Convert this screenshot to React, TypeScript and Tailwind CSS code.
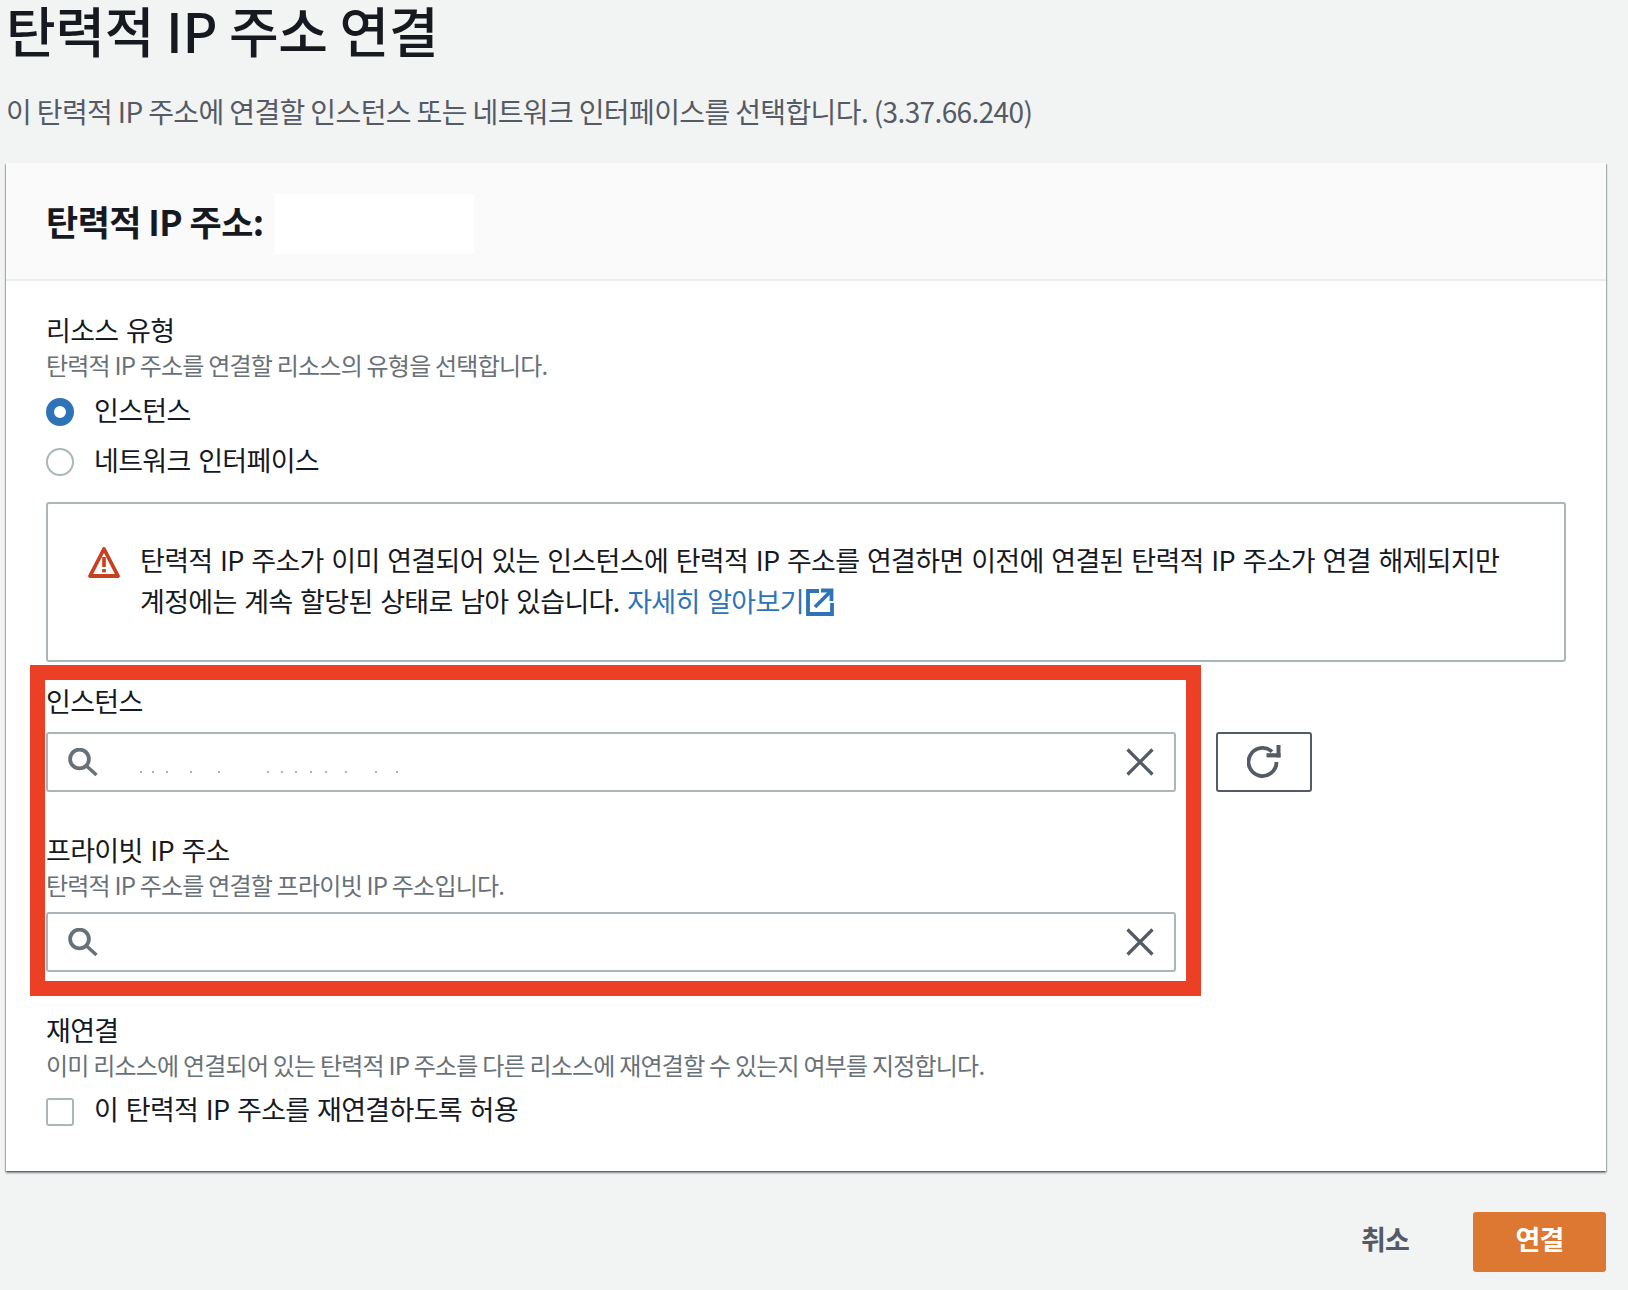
const font = "font-['Noto_Sans_CJK_KR','Noto_Sans',sans-serif]"
const bodyText = 'text-[27px] tracking-[-0.68px] [word-spacing:2.2px] text-[#16191f]'

function Dots() {
  // leftover specks of the masked instance id
  const gaps = [0, 10, 12, 22, 26, 47, 12, 12, 13, 13, 18, 28, 19]
  return (
    <div className="ml-[42px] mt-[20px] flex items-center">
      {gaps.map((g, i) => (
        <span key={i} className="h-[2px] w-[2px] bg-[#aab7b8]" style={{ marginLeft: g }} />
      ))}
    </div>
  )
}

function SearchIcon() {
  return (
    <svg viewBox="0 0 30 28" className="h-[28px] w-[30px] shrink-0" fill="none" stroke="#687078">
      <circle cx="11.5" cy="11" r="9.4" strokeWidth="3.8" />
      <path d="M18 17.5 L28.5 27" strokeWidth="3.4" />
    </svg>
  )
}

function CloseIcon() {
  return (
    <svg viewBox="0 0 28 28" className="h-[28px] w-[28px] shrink-0" fill="none" stroke="#545b64" strokeWidth="3.2">
      <path d="M1.5 1.5 L26.5 26.5 M26.5 1.5 L1.5 26.5" />
    </svg>
  )
}

function SearchInput({ masked }: { masked?: boolean }) {
  return (
    <div className="flex h-[60px] items-center rounded-[3px] border-2 border-[#aab7b8] bg-white pl-[20px] pr-[20px]">
      <SearchIcon />
      <div className="flex-1">{masked && <Dots />}</div>
      <CloseIcon />
    </div>
  )
}

function Label({ children, leading = 'leading-[28px]' }: { children: React.ReactNode; leading?: string }) {
  return <div className={`h-[32px] ${leading} ${bodyText}`}>{children}</div>
}

function Desc({ children, className = 'leading-[24px]' }: { children: React.ReactNode; className?: string }) {
  return <div className={`h-[28px] text-[24px] tracking-[-0.78px] text-[#687078] ${className}`}>{children}</div>
}

export default function App() {
  return (
    <div className={`${font} min-h-[1290px] w-[1628px] overflow-hidden bg-[#f2f3f3] pl-[6px]`}>
      <h1 className="h-[62px] text-[54px] font-medium leading-[60px] tracking-[-0.3px] text-[#16191f]">
        탄력적 IP 주소 연결
      </h1>
      <p className="mt-[29px] h-[40px] text-[28px] leading-[40px] tracking-[-0.62px] text-[#545b64]">
        이 탄력적 IP 주소에 연결할 인스턴스 또는 네트워크 인터페이스를 선택합니다. (3.37.66.240)
      </p>

      <div className="mt-[32px] w-[1600px] bg-white shadow-[0_2px_2px_0_rgba(0,28,36,0.45),1px_1px_1px_0_rgba(0,28,36,0.2),-1px_1px_1px_0_rgba(0,28,36,0.2)]">
        <div className="flex h-[118px] items-center border-b-2 border-[#eaeded] bg-[#fafafa] pl-[40px]">
          <h2 className="text-[35px] font-bold leading-[40px] tracking-[-0.55px] text-[#16191f]">탄력적 IP 주소:</h2>
          <div className="ml-[10px] mt-[6px] h-[60px] w-[200px] bg-white" />
        </div>

        <div className="pb-[45px] pl-[40px] pr-[40px] pt-[33px]">
          <Label leading="leading-[32px]">리소스 유형</Label>
          <Desc className="mt-[6px] leading-[26px]">탄력적 IP 주소를 연결할 리소스의 유형을 선택합니다.</Desc>

          <div className="mt-[18px] flex h-[28px] items-center">
            <span className="h-[28px] w-[28px] rounded-full border-[8px] border-[#2e73b8] bg-white" />
            <span className={`ml-[20px] pb-[3px] ${bodyText}`}>인스턴스</span>
          </div>
          <div className="mt-[22px] flex h-[28px] items-center">
            <span className="h-[28px] w-[28px] rounded-full border-2 border-[#aab7b8] bg-white" />
            <span className={`ml-[20px] pb-[3px] ${bodyText}`}>네트워크 인터페이스</span>
          </div>

          <div className="mt-[26px] flex h-[160px] rounded-[3px] border-2 border-[#aab7b8] pl-[40px] pt-[35px]">
            <svg viewBox="0 0 32 32" className="mt-[7px] h-[32px] w-[32px] shrink-0">
              <path d="M16 3 L30 30 H2 Z" fill="none" stroke="#c7401f" strokeWidth="3.8" strokeLinejoin="round" />
              <rect x="14.2" y="11" width="3.6" height="10" fill="#c7401f" />
              <rect x="14.2" y="23" width="3.6" height="3.4" fill="#c7401f" />
            </svg>
            <p className={`ml-[20px] w-[1380px] leading-[41px] ${bodyText}`}>
              탄력적 IP 주소가 이미 연결되어 있는 인스턴스에 탄력적 IP 주소를 연결하면 이전에 연결된 탄력적 IP 주소가 연결 해제되지만<br />
              계정에는 계속 할당된 상태로 남아 있습니다.{' '}
              <a className="text-[#2e73b8]">
                자세히 알아보기
                <svg viewBox="0 0 28 28" className="ml-[2px] inline h-[28px] w-[28px] align-[-4px]" fill="none" stroke="#2e73b8" strokeWidth="3.8">
                  <path d="M13 3 H2 V26 H26 V15" />
                  <path d="M9 19 L24 4" />
                  <path d="M15 2.5 H25.5 V13" />
                </svg>
              </a>
            </p>
          </div>

          <div className="mt-[24px] flex items-start gap-[40px]">
            <div className="relative w-[1130px]">
              <Label leading="leading-[29px]">인스턴스</Label>
              <div className="mt-[14px]">
                <SearchInput masked />
              </div>
              <div className="mt-[44px]">
                <Label>프라이빗 IP 주소</Label>
              </div>
              <Desc className="mt-[5px] leading-[24px]">탄력적 IP 주소를 연결할 프라이빗 IP 주소입니다.</Desc>
              <div className="mt-[11px]">
                <SearchInput />
              </div>
              <div className="pointer-events-none absolute -bottom-[24px] -left-[16px] -right-[25px] -top-[21px] border-[15px] border-[#eb4026]" />
            </div>
            <button className="mt-[46px] flex h-[60px] w-[96px] items-center justify-center rounded-[3px] border-2 border-[#545b64] bg-white">
              <svg viewBox="0 0 34 34" className="h-[34px] w-[34px]" fill="none" stroke="#545b64" strokeWidth="3.8">
                <path d="M25 6.7 A14 14 0 1 0 29.5 17" />
                <rect x="19.5" y="8.2" width="14" height="4.2" fill="#545b64" stroke="none" />
                <rect x="29.5" y="0" width="4" height="12.4" fill="#545b64" stroke="none" />
              </svg>
            </button>
          </div>

          <div className="mt-[44px]">
            <Label>재연결</Label>
          </div>
          <Desc className="mt-[5px] leading-[24px]">이미 리소스에 연결되어 있는 탄력적 IP 주소를 다른 리소스에 재연결할 수 있는지 여부를 지정합니다.</Desc>
          <div className="mt-[17px] flex h-[28px] items-center">
            <span className="h-[28px] w-[28px] rounded-[3px] border-2 border-[#aab7b8] bg-white" />
            <span className={`ml-[20px] pb-[5px] ${bodyText}`}>이 탄력적 IP 주소를 재연결하도록 허용</span>
          </div>
        </div>
      </div>

      <div className="mt-[41px] flex w-[1600px] items-center justify-end">
        <button className="mr-[64px] pb-[5px] text-[27px] font-bold tracking-[-0.8px] text-[#545b64]">취소</button>
        <button className="h-[60px] w-[133px] rounded-[3px] bg-[#dd7833] pb-[5px] text-[27px] font-bold tracking-[-0.8px] text-white">연결</button>
      </div>
    </div>
  )
}
